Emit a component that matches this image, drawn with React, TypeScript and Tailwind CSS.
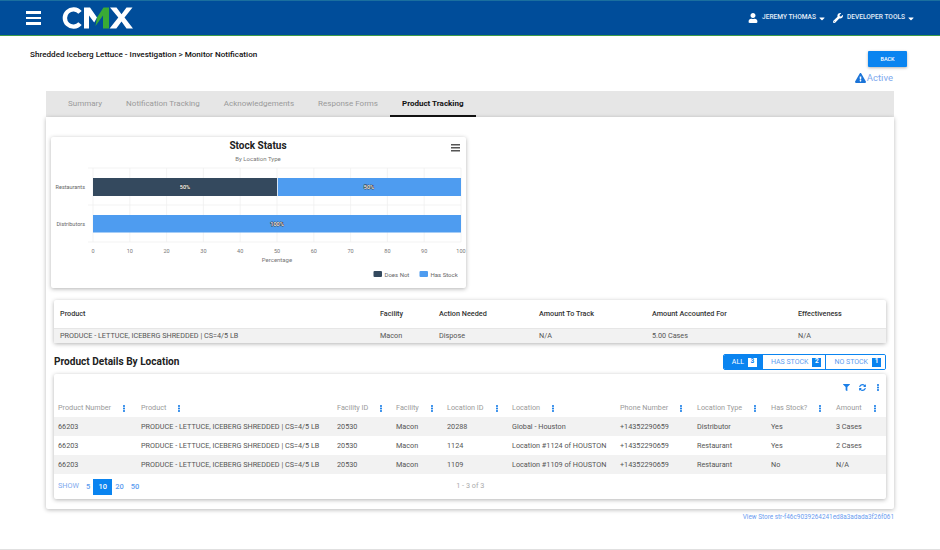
import { FaUser, FaWrench, FaCaretDown, FaExclamationTriangle, FaFilter, FaSyncAlt, FaEllipsisV } from "react-icons/fa"

const tabs = ["Summary", "Notification Tracking", "Acknowledgements", "Response Forms"]
const ticks = [0, 10, 20, 30, 40, 50, 60, 70, 80, 90, 100]
const product = "PRODUCE - LETTUCE, ICEBERG SHREDDED | CS=4/5 LB"

const columns = ["Product Number", "Product", "Facility ID", "Facility", "Location ID", "Location", "Phone Number", "Location Type", "Has Stock?", "Amount"]

const rows = [
  ["66203", product, "20530", "Macon", "20288", "Global - Houston", "+14352290659", "Distributor", "Yes", "3 Cases"],
  ["66203", product, "20530", "Macon", "1124", "Location #1124 of HOUSTON", "+14352290659", "Restaurant", "Yes", "2 Cases"],
  ["66203", product, "20530", "Macon", "1109", "Location #1109 of HOUSTON", "+14352290659", "Restaurant", "No", "N/A"],
]

function Logo() {
  return (
    <svg width="71" height="22" viewBox="0 0 71 22" className="ml-[21px]">
      <path d="M18 5.4 A8.6 8.6 0 1 0 18 16.6" fill="none" stroke="#fff" strokeWidth="4.4" />
      <path d="M22 21.5 V0.5 H28 L35 10.5 L32.2 15.5 L27 8.5 V21.5 Z" fill="#fff" />
      <path d="M35 10.5 L41.5 0.5 H47 V21.5 H41 V8.5 L33.5 19 Z" fill="#3aaa35" />
      <path d="M48 0.5 H54.5 L59.5 7.2 L64.5 0.5 H70.5 L62.5 10.6 L71 21.5 H64.5 L59.5 14.4 L54.3 21.5 H47.6 L56.3 10.6 Z" fill="#fff" />
    </svg>
  )
}

function Chart() {
  const x = (v: number) => 42 + v * 3.68
  return (
    <svg width="415" height="151" viewBox="0 0 415 151" className="block">
      <text x="207" y="12" textAnchor="middle" fontSize="10" fontWeight="700" fill="#222">Stock Status</text>
      <text x="207" y="23.5" textAnchor="middle" fontSize="6" fill="#777">By Location Type</text>
      <rect x="400" y="7" width="9" height="1.5" fill="#555" />
      <rect x="400" y="10" width="9" height="1.5" fill="#555" />
      <rect x="400" y="13" width="9" height="1.5" fill="#555" />
      {ticks.map((t) => (
        <g key={t}>
          <line x1={x(t)} x2={x(t)} y1="31" y2="105" stroke="#f0f0f0" strokeWidth="0.8" />
          <text x={x(t)} y="115.5" textAnchor="middle" fontSize="5.5" fill="#777">{t}</text>
        </g>
      ))}
      {[31, 68, 105].map((y) => (
        <line key={y} x1="37" x2="410" y1={y} y2={y} stroke="#f0f0f0" strokeWidth="0.8" />
      ))}
      <rect x={x(0)} y="41" width="184" height="18" fill="#34495e" />
      <rect x={x(50) + 0.8} y="41" width="183.2" height="18" fill="#4e9cf0" />
      <rect x={x(0)} y="78" width="368" height="17.5" fill="#4e9cf0" />
      <text x={x(25)} y="52" textAnchor="middle" fontSize="5.5" fontWeight="500" fill="#fff" stroke="#333" strokeWidth="0.9" paintOrder="stroke">50%</text>
      <text x={x(75)} y="52" textAnchor="middle" fontSize="5.5" fontWeight="500" fill="#fff" stroke="#333" strokeWidth="0.9" paintOrder="stroke">50%</text>
      <text x={x(50)} y="89" textAnchor="middle" fontSize="5.5" fontWeight="500" fill="#fff" stroke="#333" strokeWidth="0.9" paintOrder="stroke">100%</text>
      <text x="34" y="52" textAnchor="end" fontSize="5.5" fill="#666">Restaurants</text>
      <text x="34" y="89" textAnchor="end" fontSize="5.5" fill="#666">Distributors</text>
      <text x={x(50)} y="124.5" textAnchor="middle" fontSize="6" fill="#777">Percentage</text>
      <rect x="322.5" y="134" width="8.5" height="6" rx="1" fill="#34495e" />
      <text x="333.5" y="139.5" fontSize="6" fill="#666">Does Not</text>
      <rect x="368.5" y="134" width="8.5" height="6" rx="1" fill="#4e9cf0" />
      <text x="379.5" y="139.5" fontSize="6" fill="#666">Has Stock</text>
    </svg>
  )
}

function FilterButton({ label, count, active, last }: { label: string; count: number; active?: boolean; last?: boolean }) {
  return (
    <div
      className={
        "flex h-full items-center gap-[4px] pl-[8px] " +
        (active ? "bg-[#0a84f0] pr-[5px] text-white " : "bg-white pr-[4px] text-[#5c9cf0] ") +
        (last ? "" : "border-r border-[#0a84f0]")
      }
    >
      <span>{label}</span>
      <span
        className={
          "flex h-[9px] w-[9px] items-center justify-center text-[6.5px] font-bold " +
          (active ? "bg-white text-[#0a84f0]" : "bg-[#0a84f0] text-white")
        }
      >
        {count}
      </span>
    </div>
  )
}

export default function App() {
  return (
    <div className="relative h-[550px] w-[940px] overflow-hidden bg-white font-['Roboto',sans-serif]">
      <header className="flex h-[36px] items-center border-t border-b border-t-[#1a6f9f] border-b-[#3c9a4a] bg-[#004d9a] text-white">
        <div className="ml-[26px] flex w-[15px] flex-col gap-[3px]">
          <div className="h-[2.5px] bg-white" />
          <div className="h-[2.5px] bg-white" />
          <div className="h-[2.5px] bg-white" />
        </div>
        <Logo />
        <div className="ml-auto mr-[25px] flex items-center text-[6.6px] font-medium text-[#e3edf8]">
          <FaUser className="h-[10px] w-[10px] text-white" />
          <span className="ml-[4px]">JEREMY THOMAS</span>
          <FaCaretDown className="ml-[2px] h-[9px] w-[8px] text-white" />
          <FaWrench className="ml-[7px] h-[10px] w-[10px] text-white" />
          <span className="ml-[4px]">DEVELOPER TOOLS</span>
          <FaCaretDown className="ml-[2px] h-[9px] w-[8px] text-white" />
        </div>
      </header>

      <div className="flex justify-between pl-[30px] pr-[33px] pt-[15px]">
        <h1 className="mt-[-2px] text-[8.1px] font-medium leading-[10px] text-[#111]">
          Shredded Iceberg Lettuce - Investigation &gt; Monitor Notification
        </h1>
        <button className="h-[16px] w-[39px] rounded-[1px] bg-[#0a84f0] text-[5.5px] font-medium text-white shadow-[0_1px_3px_rgba(0,0,0,0.3)]">
          BACK
        </button>
      </div>

      <div className="mr-[47px] mt-[4px] flex h-[14px] items-center justify-end gap-[1px] text-[9.5px] text-[#7ea9ee]">
        <FaExclamationTriangle className="h-[10px] w-[11px] text-[#1b74d8]" />
        <span>Active</span>
      </div>

      <div className="mx-[46px] mt-[6px] flex h-[26px] bg-[#e6e6e6] pl-[10px] text-[8px] text-[#9a9a9a]">
        {tabs.map((t) => (
          <div key={t} className="flex items-center px-[12px]">{t}</div>
        ))}
        <div className="flex items-center border-b-2 border-[#111] px-[12px] pt-[2px] font-bold text-[#111]">
          Product Tracking
        </div>
      </div>

      <main className="mx-[46px] h-[392px] rounded-b-[2px] bg-white pl-[5px] pr-[8px] pt-[20px] shadow-[0_1px_4px_rgba(0,0,0,0.28)]">
        <div className="h-[151px] w-[415px] rounded-[2px] bg-white shadow-[0_1px_4px_rgba(0,0,0,0.3)]">
          <Chart />
        </div>

        <div className="ml-[3px] mt-[12px] rounded-[2px] bg-white text-[7.25px] shadow-[0_1px_4px_rgba(0,0,0,0.3)]">
          <div className="grid h-[28px] grid-cols-[320px_59px_100px_113px_146px_1fr] items-center pl-[6px] font-medium text-[#333]">
            <div>Product</div>
            <div>Facility</div>
            <div>Action Needed</div>
            <div>Amount To Track</div>
            <div>Amount Accounted For</div>
            <div>Effectiveness</div>
          </div>
          <div className="grid h-[15px] grid-cols-[320px_59px_100px_113px_146px_1fr] items-center border-t border-[#e6e6e6] bg-[#f2f2f2] pl-[6px] text-[#555]">
            <div>{product}</div>
            <div>Macon</div>
            <div>Dispose</div>
            <div>N/A</div>
            <div>5.00 Cases</div>
            <div>N/A</div>
          </div>
        </div>

        <div className="ml-[3px] mt-[11px] flex h-[16px] items-center justify-between">
          <h2 className="text-[10.1px] font-bold text-[#222]">Product Details By Location</h2>
          <div className="flex h-[16px] items-center overflow-hidden rounded-[2px] border border-[#0a84f0] text-[7px]">
            <FilterButton label="ALL" count={3} active />
            <FilterButton label="HAS STOCK" count={2} />
            <FilterButton label="NO STOCK" count={1} last />
          </div>
        </div>

        <div className="ml-[3px] mt-[4px] h-[125px] rounded-[2px] bg-white text-[7.25px] shadow-[0_1px_4px_rgba(0,0,0,0.3)]">
          <div className="flex h-[25px] items-center justify-end pr-[6px] pt-[1px] text-[#1b7fe8]">
            <FaFilter className="h-[7px] w-[7px]" />
            <FaSyncAlt className="ml-[9px] h-[7px] w-[7px]" />
            <FaEllipsisV className="ml-[10px] h-[7px] w-[4px]" />
          </div>
          <div className="grid h-[18px] grid-cols-[83px_196px_59px_51px_65px_108px_77px_74px_65px_1fr] items-center pl-[4px] text-[#9a9a9a]">
            {columns.map((c) => (
              <div key={c} className="flex items-center">
                <span className="whitespace-nowrap">{c}</span>
                <FaEllipsisV className="ml-[11px] h-[7px] w-[4px] text-[#1b7fe8]" />
              </div>
            ))}
          </div>
          {rows.map((r, i) => (
            <div
              key={r[4]}
              className={
                "grid h-[19px] grid-cols-[83px_196px_59px_51px_65px_108px_77px_74px_65px_1fr] items-center pl-[4px] pt-[1px] text-[#555] " +
                (i % 2 === 0 ? "bg-[#f2f2f2]" : "bg-white")
              }
            >
              {r.map((v, j) => (
                <div key={j} className="whitespace-nowrap">{v}</div>
              ))}
            </div>
          ))}
          <div className="flex h-[25px] items-center pl-[4px] text-[#7ea9ee]">
            <span className="mt-[-1px]">SHOW</span>
            <span className="ml-[7px] text-[7.5px] font-medium text-[#5c9cf0]">5</span>
            <span className="ml-[3px] flex h-[16px] w-[19px] items-center justify-center bg-[#0a84f0] text-[7.5px] font-medium text-white">10</span>
            <span className="ml-[3px] text-[7.5px] font-medium text-[#5c9cf0]">20</span>
            <span className="ml-[7px] text-[7.5px] font-medium text-[#5c9cf0]">50</span>
            <span className="ml-[317px] text-[#aaa]">1 - 3 of 3</span>
          </div>
        </div>
      </main>

      <div className="mr-[46px] mt-[4px] text-right text-[6.4px] text-[#6a9cf0]">
        View Store str-f46c9039264241ed8a3adada3f26f061
      </div>

      <div className="absolute bottom-0 left-0 h-[1px] w-full bg-[#e0e0e0]" />
    </div>
  )
}
